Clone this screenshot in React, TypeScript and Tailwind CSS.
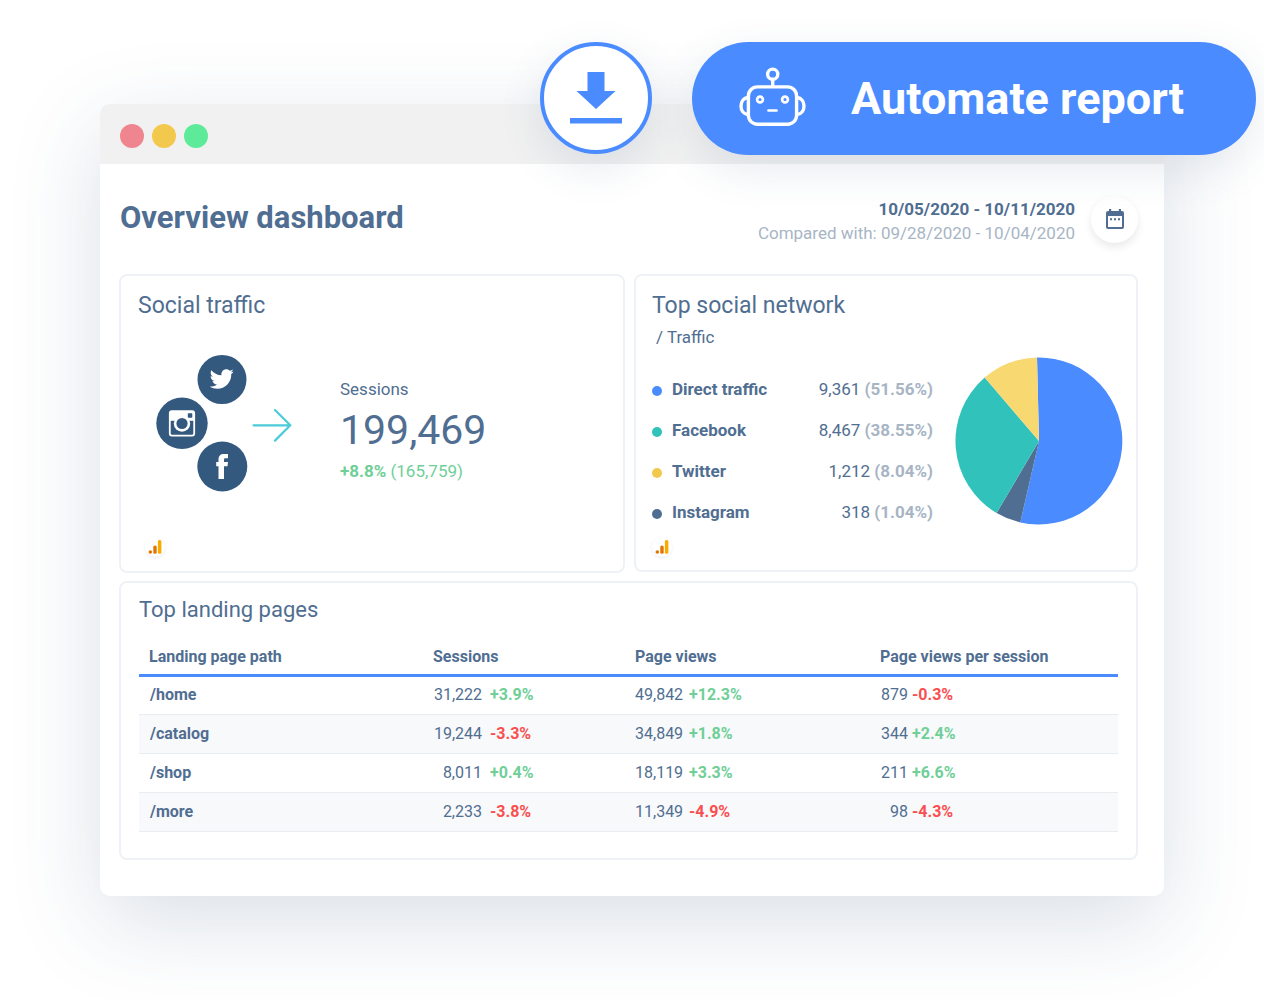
import React from "react";
import { FaTwitter } from "react-icons/fa";

type Network = { name: string; value: string; share: string; dot: string };

const networks: Network[] = [
  { name: "Direct traffic", value: "9,361", share: "(51.56%)", dot: "bg-[#4a8cff]" },
  { name: "Facebook", value: "8,467", share: "(38.55%)", dot: "bg-[#31c2bb]" },
  { name: "Twitter", value: "1,212", share: "(8.04%)", dot: "bg-[#f2c94c]" },
  { name: "Instagram", value: "318", share: "(1.04%)", dot: "bg-[#506e91]" },
];

type Metric = [value: string, change: string];

const pages: { path: string; sessions: Metric; views: Metric; perSession: Metric }[] = [
  { path: "/home", sessions: ["31,222", "+3.9%"], views: ["49,842", "+12.3%"], perSession: ["879", "-0.3%"] },
  { path: "/catalog", sessions: ["19,244", "-3.3%"], views: ["34,849", "+1.8%"], perSession: ["344", "+2.4%"] },
  { path: "/shop", sessions: ["8,011", "+0.4%"], views: ["18,119", "+3.3%"], perSession: ["211", "+6.6%"] },
  { path: "/more", sessions: ["2,233", "-3.8%"], views: ["11,349", "-4.9%"], perSession: ["98", "-4.3%"] },
];

function RobotIcon() {
  return (
    <svg width="68" height="64" viewBox="0 0 68 64" fill="none" stroke="white" strokeWidth="3.4" strokeLinecap="round" aria-hidden="true">
      <circle cx="33.7" cy="7.2" r="5.1" />
      <path d="M33.7 12.5v6" />
      <rect x="9.4" y="19.9" width="48.2" height="37.4" rx="9" />
      <path d="M9 30.5C4.5 31 2 34.5 2 39s2.500 8 7 8.500M58 30.500c4.500.5 7 4 7 8.500s-2.500 8-7 8.500" />
      <circle cx="21" cy="32.500" r="2.900" strokeWidth="2.700" />
      <circle cx="46" cy="32.500" r="2.900" strokeWidth="2.700" />
      <path d="M29.500 43.500h8" strokeWidth="2.700" />
    </svg>
  );
}

function DownloadIcon() {
  return (
    <svg width="52" height="52" viewBox="0 0 52 52" fill="#4a8cff" aria-hidden="true">
      <path d="M17.500 0h17v19h11L26 37 6.500 19h11z" />
      <path d="M0 46h52v5.500H0z" />
    </svg>
  );
}

function CalendarIcon() {
  return (
    <svg width="18" height="20" viewBox="0 0 18 20" fill="#506e91" aria-hidden="true">
      <path
        fillRule="evenodd"
        d="M3 0h2.200v2h7.600V0H15v2h1a2 2 0 0 1 2 2v14a2 2 0 0 1-2 2H2a2 2 0 0 1-2-2V4a2 2 0 0 1 2-2h1zM2 7v11h14V7z"
      />
      <path d="M4 9.200h2v2H4zM8 9.200h2v2H8zM12 9.200h2v2h-2z" />
    </svg>
  );
}

function AnalyticsBadge() {
  return (
    <span className="flex size-5 items-center justify-center rounded-full bg-white shadow-[0_1px_3px_rgba(80,110,145,0.14)]">
      <svg width="14" height="14" viewBox="0 0 14 14" role="img" aria-label="Google Analytics">
        <circle cx="2.300" cy="12" r="1.800" fill="#e37400" />
        <rect x="5.300" y="5.500" width="3.400" height="8.300" rx="1.500" fill="#e37400" />
        <rect x="9.900" y="0" width="3.500" height="13.800" rx="1.500" fill="#f9ab00" />
      </svg>
    </span>
  );
}

function SocialCluster() {
  return (
    <svg width="136" height="138" viewBox="0 0 136 138" role="img" aria-label="Twitter, Instagram and Facebook" className="shrink-0">
      <g fill="#34597f">
        <circle cx="66" cy="24.500" r="24.500" />
        <circle cx="26" cy="68.300" r="25.700" />
        <circle cx="66.300" cy="111.500" r="25" />
      </g>
      <FaTwitter x="53.700" y="12" size={24} color="white" />
      <rect x="13.800" y="56.200" width="24.400" height="24.400" rx="2" fill="none" stroke="white" strokeWidth="1.800" />
      <path d="M13.500 57h25v8.800h-25z" fill="white" />
      <circle cx="26" cy="68.500" r="8.200" fill="white" />
      <circle cx="26" cy="68.500" r="5.600" fill="#34597f" />
      <rect x="31.800" y="58.200" width="4.500" height="4.500" rx="0.600" fill="#34597f" />
      <path
        fill="white"
        d="M62.500 124v-12.700h-2.300V107h2.300v-2.400c0-3.700 1.900-5.600 5.300-5.600H72v4.300h-2.300c-1.400 0-1.700.6-1.700 1.600v2.100h4l-.5 4.300H68V124z"
      />
      <path d="M97.500 70.300h36M119 55l15.300 15.300L119 85.600" fill="none" stroke="#4ccbd8" strokeWidth="2.200" strokeLinecap="round" strokeLinejoin="round" />
    </svg>
  );
}

function TrafficPie() {
  return (
    <svg width="168" height="168" viewBox="0 0 168 168" role="img" aria-label="Traffic share by network" className="shrink-0">
      <path d="M84 84 82 .5A83.500 83.500 0 1 1 65.300 165.400z" fill="#4a8cff" />
      <path d="M84 84 65.300 165.400A83.500 83.500 0 0 1 41.600 156z" fill="#506e91" />
      <path d="M84 84 41.600 156A83.500 83.500 0 0 1 29.700 20.600z" fill="#31c2bb" />
      <path d="M84 84 29.700 20.600A83.500 83.500 0 0 1 82 .5z" fill="#f8d870" />
    </svg>
  );
}

function MetricCell({ metric, numberClass }: { metric: Metric; numberClass: string }) {
  const [value, change] = metric;
  return (
    <td className="p-0">
      <span className="flex items-center">
        <span className={numberClass}>{value}</span>
        <span className={change.startsWith("+") ? "font-bold text-[#6fcf97]" : "font-bold text-[#f94f4f]"}>{change}</span>
      </span>
    </td>
  );
}

export default function App() {
  return (
    <div className="overflow-hidden bg-white pb-[104px] pt-[42px] font-['Roboto',sans-serif] text-[#506e91]">
      <div className="relative z-10 flex items-start justify-end gap-10 pr-2">
        <button
          type="button"
          aria-label="Download report"
          className="flex size-28 items-center justify-center rounded-full border-4 border-[#4a8cff] bg-white shadow-[0_14px_44px_rgba(50,85,120,0.12)]"
        >
          <DownloadIcon />
        </button>
        <button
          type="button"
          className="flex h-[113px] items-center gap-11 rounded-full bg-[#4a8cff] pl-[47px] pr-[72px] text-[45px] font-bold text-white shadow-[0_14px_44px_rgba(50,85,120,0.12)]"
        >
          <RobotIcon />
          <span>Automate report</span>
        </button>
      </div>

      <main className="mx-[100px] -mt-[51px] rounded-[10px] bg-white shadow-[0_26px_90px_rgba(50,85,120,0.18)]">
        <div className="flex h-[60px] items-center gap-2 rounded-t-[10px] bg-[#f1f1f1] px-5 pt-1">
          <span className="size-6 rounded-full bg-[#ef868f]" />
          <span className="size-6 rounded-full bg-[#f2c94c]" />
          <span className="size-6 rounded-full bg-[#5eeb99]" />
        </div>

        <div className="pb-9 pl-[19px] pr-[26px] pt-[29px]">
          <header className="flex items-center justify-between">
            <h1 className="pb-0.5 pl-px text-[31px] font-bold leading-10">Overview dashboard</h1>
            <div className="flex items-center gap-4">
              <p className="pt-1 text-right text-[17px] leading-6">
                <strong className="block font-bold">10/05/2020 - 10/11/2020</strong>
                <span className="block text-[#a7b5c5]">Compared with: 09/28/2020 - 10/04/2020</span>
              </p>
              <button
                type="button"
                aria-label="Choose dates"
                className="flex size-[47px] items-center justify-center rounded-full bg-white shadow-[0_4px_8px_rgba(0,0,0,0.09)]"
              >
                <CalendarIcon />
              </button>
            </div>
          </header>

          <div className="mt-[29px] grid grid-cols-[506fr_504fr] gap-[9px]">
            <section className="flex h-[299px] flex-col rounded-lg border-2 border-[#eef2f6] pb-3.5 pt-3.5">
              <h2 className="pl-[17px] text-[23px] leading-8">Social traffic</h2>
              <div className="mt-[33px] flex items-center gap-12 pl-[35px]">
                <SocialCluster />
                <div className="pt-3">
                  <p className="text-[17px] leading-6">Sessions</p>
                  <p className="text-[41px] leading-[58px]">199,469</p>
                  <p className="text-[17px] leading-6 text-[#6fcf97]">
                    <strong className="font-bold">+8.8%</strong> (165,759)
                  </p>
                </div>
              </div>
              <div className="mt-auto pl-6">
                <AnalyticsBadge />
              </div>
            </section>

            <section className="flex h-[298px] flex-col rounded-lg border-2 border-[#eef2f6] pb-[13px] pl-4 pr-[13px] pt-3.5">
              <h2 className="text-[23px] leading-8">Top social network</h2>
              <p className="pl-1 text-[17px] leading-[30px]">/ Traffic</p>
              <div className="mt-[5px] flex items-start justify-between">
                <ul className="w-[281px] pt-3">
                  {networks.map((n) => (
                    <li key={n.name} className="flex h-[41px] items-center text-[17px]">
                      <span className={`mr-2.5 mt-0.5 size-2.5 rounded-full ${n.dot}`} />
                      <strong className="font-bold">{n.name}</strong>
                      <span className="ml-auto">
                        {n.value} <strong className="font-bold text-[#a7b5c5]">{n.share}</strong>
                      </span>
                    </li>
                  ))}
                </ul>
                <TrafficPie />
              </div>
              <div className="mt-auto">
                <AnalyticsBadge />
              </div>
            </section>
          </div>

          <section className="mt-2 rounded-lg border-2 border-[#eef2f6] pb-[26px] pl-[18px] pr-[18px] pt-[11px]">
            <h2 className="text-[22px] leading-8">Top landing pages</h2>
            <table className="mt-3.5 w-full table-fixed border-collapse text-left text-[16px]">
              <colgroup>
                <col className="w-[294px]" />
                <col className="w-[202px]" />
                <col className="w-[245px]" />
                <col />
              </colgroup>
              <thead>
                <tr className="h-[35px] border-b-[3px] border-[#4a8cff]">
                  <th scope="col" className="p-0 pl-2.5 font-bold">Landing page path</th>
                  <th scope="col" className="p-0 font-bold">Sessions</th>
                  <th scope="col" className="p-0 font-bold">Page views</th>
                  <th scope="col" className="p-0 font-bold">Page views per session</th>
                </tr>
              </thead>
              <tbody>
                {pages.map((p) => (
                  <tr key={p.path} className="h-[39px] border-b border-[#e8edf2] even:bg-[#f8f9fb]">
                    <th scope="row" className="p-0 pl-[11px] font-bold">{p.path}</th>
                    <MetricCell metric={p.sessions} numberClass="mr-2 w-[49px] text-right" />
                    <MetricCell metric={p.views} numberClass="mr-1.5 w-12 text-right" />
                    <MetricCell metric={p.perSession} numberClass="mr-1 w-7 text-right" />
                  </tr>
                ))}
              </tbody>
            </table>
          </section>
        </div>
      </main>
    </div>
  );
}
